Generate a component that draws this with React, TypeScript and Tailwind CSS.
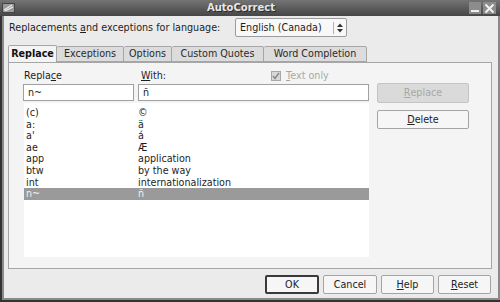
import React from "react";

const rows: [string, string][] = [
  ["(c)", "©"],
  ["a:", "ä"],
  ["a'", "á"],
  ["ae", "Æ"],
  ["app", "application"],
  ["btw", "by the way"],
  ["int", "internationalization"],
  ["n~", "ñ"],
];

const tabs = ["Replace", "Exceptions", "Options", "Custom Quotes", "Word Completion"];
const tabWidths = ["w-[49px]", "w-[67px]", "w-[48px]", "w-[92px]", "w-[103px]"];

function U({ children }: { children: React.ReactNode }) {
  return <span className="underline underline-offset-[1px] decoration-[1px]">{children}</span>;
}

function Btn({
  children,
  className = "",
  disabled = false,
  isDefault = false,
}: {
  children: React.ReactNode;
  className?: string;
  disabled?: boolean;
  isDefault?: boolean;
}) {
  return (
    <div
      className={
        "flex items-center justify-center rounded-[2px] border " +
        (disabled
          ? "border-[#c4c4c4] bg-[#dadada] text-[#a8a8a8] "
          : isDefault
          ? "border-[#3a3a3a] border-2 bg-[#f6f6f6] text-[#222] "
          : "border-[#a4a4a4] bg-[#f6f6f6] text-[#222] ") +
        className
      }
    >
      {children}
    </div>
  );
}

export default function App() {
  return (
    <div
      className="w-[500px] h-[302px] overflow-hidden flex flex-col bg-[#333] text-[9.6px] leading-none text-[#1e1e1e]"
      style={{ fontFamily: '"DejaVu Sans", Verdana, sans-serif' }}
    >
      {/* title bar */}
      <div className="h-[16px] flex items-center bg-gradient-to-b from-[#747474] to-[#464646]">
        <div className="w-[16px] h-[16px] flex items-center justify-center">
          <svg width="13" height="12" viewBox="0 0 13 12">
            <rect x="0.5" y="1.5" width="12" height="9" fill="#9a9a9a" stroke="#444" />
            <path d="M2 8 L10 3 M3 9 L11 5" stroke="#eee" strokeWidth="1.2" />
          </svg>
        </div>
        <div className="flex-1 flex justify-center">
          <span
            className="text-[10px] font-bold text-[#e6e6e6]"
            style={{ textShadow: "1px 1px 0 #2a2a2a" }}
          >
            AutoCorrect
          </span>
        </div>
        <div className="w-[34px] flex items-center gap-[2px] pl-[3px]">
          <div className="w-[12px] h-[12px] bg-[#8c8c8c] flex items-end justify-center pb-[2px]">
            <div className="w-[8px] h-[2px] bg-[#eee]" />
          </div>
          <div className="w-[13px] h-[12px] bg-[#8c8c8c] flex items-center justify-center">
            <svg width="11" height="11" viewBox="0 0 11 11">
              <path d="M1.5 1.5 L9.5 9.5 M9.5 1.5 L1.5 9.5" stroke="#f2f2f2" strokeWidth="2" />
            </svg>
          </div>
        </div>
      </div>

      {/* body with frame */}
      <div className="flex-1 flex px-[2px] pb-[2px]">
        <div className="flex-1 flex border-x-[2px] border-b-[2px] border-[#8a8a8a]">
          <div className="flex-1 flex flex-col bg-[#ebebeb] pt-[2px] pb-[4px]">
            {/* language row */}
            <div className="h-[19px] flex items-center pl-[5px]">
              <span className="w-[226px]">
                Replacements <U>a</U>nd exceptions for language:
              </span>
              <div className="w-[112px] h-[19px] flex items-center border border-[#9c9c9c] rounded-[2px] bg-[#f8f8f8] pl-[4px]">
                <span className="flex-1">English (Canada)</span>
                <div className="w-[13px] h-[12px] border-l border-[#b0b0b0] flex flex-col items-center justify-center gap-[1px]">
                  <svg width="6" height="10" viewBox="0 0 6 10">
                    <path d="M0 4 L3 0.5 L6 4 Z M0 6 L3 9.5 L6 6 Z" fill="#333" />
                  </svg>
                </div>
              </div>
            </div>

            {/* tabs */}
            <div className="mt-[9px] h-[16px] flex pl-[4px] relative z-10">
              {tabs.map((t, i) => (
                <div
                  key={t}
                  className={
                    tabWidths[i] +
                    " flex items-center justify-center border-t border-r border-[#a6a6a6] rounded-t-[2px] " +
                    (i === 0
                      ? "bg-[#f4f4f4] font-bold border-l border-b-0 h-[17px] -mt-[1px] text-[#111]"
                      : "bg-[#dcdcdc] border-b h-[16px] text-[#2a2a2a]")
                  }
                >
                  {t}
                </div>
              ))}
            </div>

            {/* panel */}
            <div className="ml-[4px] mr-[6px] h-[207px] bg-[#f4f4f4] border border-[#a6a6a6] flex pl-[14px] pr-[22px] pb-[11px]">
              <div className="w-[346px] flex flex-col">
                <div className="h-[20px] flex items-center pt-[6px]">
                  <span className="w-[118px] pl-[1px]">
                    Repla<U>c</U>e
                  </span>
                  <span className="w-[130px]">
                    <U>W</U>ith:
                  </span>
                  <div className="flex items-center gap-[5px] text-[#a8a8a8]">
                    <div className="w-[10px] h-[10px] border border-[#a8a8a8] bg-[#d8d8d8] flex items-center justify-center">
                      <svg width="8" height="8" viewBox="0 0 8 8">
                        <path d="M1 4 L3 6.5 L7 1" stroke="#8a8a8a" strokeWidth="1.5" fill="none" />
                      </svg>
                    </div>
                    <span>
                      <U>T</U>ext only
                    </span>
                  </div>
                </div>
                <div className="flex gap-[4px] h-[17px] mt-[1px]">
                  <div className="w-[111px] h-[17px] border border-[#a0a0a0] bg-white flex items-center pl-[4px]">
                    n~
                  </div>
                  <div className="w-[231px] h-[17px] border border-[#a0a0a0] bg-white flex items-center pl-[4px]">
                    ñ
                  </div>
                </div>
                <div className="flex-1 mt-[2px] bg-white ml-[1px] pt-[4px]">
                  {rows.map(([a, b], i) => (
                    <div
                      key={a}
                      className={
                        "h-[11.6px] flex items-center " +
                        (i === rows.length - 1 ? "bg-[#9a9a9a] text-[#f2f2f2]" : "")
                      }
                    >
                      <span className="w-[114px] pl-[2px]">{a}</span>
                      <span>{b}</span>
                    </div>
                  ))}
                </div>
              </div>
              <div className="ml-[8px] w-[92px] flex flex-col pt-[20px] gap-[7px]">
                <Btn disabled className="h-[20px]">
                  <U>R</U>eplace
                </Btn>
                <Btn className="h-[19px]">
                  <U>D</U>elete
                </Btn>
              </div>
            </div>

            {/* bottom buttons */}
            <div className="mt-[6px] h-[19px] flex justify-end gap-[4px] pr-[7px]">
              <Btn isDefault className="w-[54px]">
                OK
              </Btn>
              <Btn className="w-[54px]">Cancel</Btn>
              <Btn className="w-[53px]">
                <U>H</U>elp
              </Btn>
              <Btn className="w-[53px]">
                <U>R</U>eset
              </Btn>
            </div>
          </div>
        </div>
      </div>
    </div>
  );
}
